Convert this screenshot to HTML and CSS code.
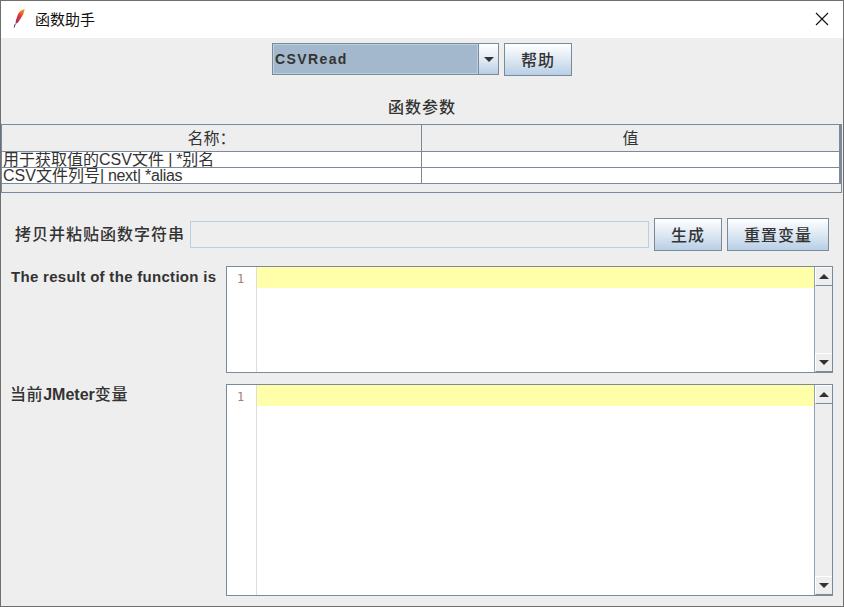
FILE: index.html
```html
<!DOCTYPE html>
<html>
<head lang="zh">
  <meta charset="UTF-8">
  <title>函数助手</title>
  <link rel="stylesheet" href="styles.css">
</head>
<body>
<div class="window">
  <div class="titlebar">
    <svg class="feather" width="16" height="22" viewBox="0 0 16 22">
      <defs>
        <linearGradient id="quill" x1="0.8" y1="0" x2="0.2" y2="1">
          <stop offset="0" stop-color="#f79a22"/>
          <stop offset="0.5" stop-color="#dc3a2c"/>
          <stop offset="1" stop-color="#9c2a78"/>
        </linearGradient>
      </defs>
      <path d="M13.6 1C11 1.6 8.6 3.4 7 6.2L5 12L4.4 16L7 14.4L10 10C12 7.2 13.4 4.2 13.6 1Z" fill="url(#quill)"/>
      <path d="M4.2 16L3.2 19.5" stroke="#5b2a80" stroke-width="1" fill="none"/>
    </svg>
    <span class="title">函数助手</span>
    <svg class="close" width="14" height="14" viewBox="0 0 14 14">
      <path d="M1 1L13 13M13 1L1 13" stroke="#111" stroke-width="1.1" fill="none"/>
    </svg>
  </div>

  <div class="picker">
    <div class="combo">
      <div class="combo-value">CSVRead</div>
      <div class="combo-arrow"><span class="arrow-down"></span></div>
    </div>
    <div class="btn btn-help">帮助</div>
  </div>

  <div class="params-title">函数参数</div>

  <div class="params">
    <div class="row row-head">
      <div class="cell">名称：</div>
      <div class="cell">值</div>
    </div>
    <div class="row">
      <div class="cell">用于获取值的CSV文件 <span class="tight">| *</span>别名</div>
      <div class="cell"></div>
    </div>
    <div class="row">
      <div class="cell">CSV文件列号<span class="tight">| next| *alias</span></div>
      <div class="cell"></div>
    </div>
  </div>

  <div class="copy-row">
    <div class="copy-label">拷贝并粘贴函数字符串</div>
    <div class="copy-field"></div>
    <div class="btn btn-make">生成</div>
    <div class="btn btn-reset">重置变量</div>
  </div>

  <div class="output output-result">
    <div class="output-label">The result of the function is</div>
    <div class="editor">
      <div class="gutter">1</div>
      <div class="code"><div class="current-line"></div></div>
      <div class="scrollbar">
        <div class="sb-btn"><span class="arrow-up"></span></div>
        <div class="sb-track"></div>
        <div class="sb-btn"><span class="arrow-down"></span></div>
      </div>
    </div>
  </div>

  <div class="output output-vars">
    <div class="output-label"><span class="cjk">当前</span>JMeter<span class="cjk">变量</span></div>
    <div class="editor">
      <div class="gutter">1</div>
      <div class="code"><div class="current-line"></div></div>
      <div class="scrollbar">
        <div class="sb-btn"><span class="arrow-up"></span></div>
        <div class="sb-track"></div>
        <div class="sb-btn"><span class="arrow-down"></span></div>
      </div>
    </div>
  </div>
</div>
</body>
</html>
```

FILE: styles.css
```css
* {
  margin: 0;
  padding: 0;
  box-sizing: border-box;
}

body {
  background: #eeeeee;
  font-family: "Liberation Sans", "Noto Sans CJK SC", sans-serif;
  color: #333333;
}

.window {
  width: 844px;
  height: 607px;
  border: 1px solid #6f6f6f;
  background: #eeeeee;
  overflow: hidden;
}

.titlebar {
  height: 37px;
  background: #fff;
  display: flex;
  align-items: center;
  padding-left: 10px;
  padding-right: 14px;
}

.feather {
  flex: none;
  margin-top: -1px;
}

.title {
  margin-left: 8px;
  margin-top: -2px;
  font-family: "Noto Sans CJK SC", sans-serif;
  font-size: 15px;
  color: #111;
  flex: 1;
}

.close {
  margin-top: -1px;
}

.picker {
  display: flex;
  justify-content: center;
  align-items: flex-start;
  gap: 5px;
  margin-top: 5px;
}

.combo {
  width: 227px;
  height: 32px;
  display: flex;
  border: 1px solid #7a8a99;
}

.combo-value {
  flex: 1;
  background: #a3b8cc;
  border: 1px solid #b8cfe5;
  font-weight: bold;
  font-size: 14px;
  letter-spacing: 1.4px;
  line-height: 28px;
  padding-left: 1px;
}

.combo-arrow {
  width: 20px;
  border-left: 1px solid #7a8a99;
  background: linear-gradient(#fff, #dde8f3 55%, #b8cfe5);
  display: flex;
  align-items: center;
  justify-content: center;
}

.arrow-down {
  width: 0;
  height: 0;
  border-left: 5px solid transparent;
  border-right: 5px solid transparent;
  border-top: 5px solid #333;
}

.arrow-up {
  width: 0;
  height: 0;
  border-left: 5px solid transparent;
  border-right: 5px solid transparent;
  border-bottom: 5px solid #333;
}

.btn {
  height: 33px;
  border: 1px solid #7a8a99;
  background: linear-gradient(#fff, #dde8f3 50%, #b8cfe5);
  font-family: "Noto Sans CJK SC", sans-serif;
  font-size: 16px;
  font-weight: 500;
  letter-spacing: 1px;
  line-height: 30px;
  text-align: center;
}

.btn-help {
  width: 68px;
}

.params-title {
  margin-top: 12px;
  height: 36px;
  line-height: 36px;
  text-align: center;
  font-family: "Noto Sans CJK SC", sans-serif;
  font-size: 16px;
  font-weight: 500;
  letter-spacing: 1px;
}

.params {
  width: 841px;
  height: 69px;
  border: 1px solid #7a8a99;
}

.row {
  display: grid;
  grid-template-columns: 420px 1fr;
  height: 16px;
  background: #fff;
  border-bottom: 1px solid #7a8a99;
  border-right: 2px solid #7a8a99;
}

.row-head {
  height: 27px;
  background: #eeeeee;
}

.cell {
  font-size: 16px;
  line-height: 16px;
  white-space: nowrap;
  overflow: hidden;
  padding-left: 1px;
}

.cell:first-child {
  border-right: 1px solid #7a8a99;
}

.row-head .cell {
  line-height: 27px;
  text-align: center;
  padding-left: 0;
}

.tight {
  letter-spacing: -0.3px;
}

.copy-row {
  display: flex;
  align-items: center;
  gap: 5px;
  margin-top: 25px;
  height: 33px;
  padding-left: 14px;
}

.copy-label {
  width: 170px;
  margin-top: -3px;
  font-family: "Noto Sans CJK SC", sans-serif;
  font-size: 16px;
  font-weight: 500;
  letter-spacing: 1px;
  white-space: nowrap;
}

.copy-field {
  width: 459px;
  height: 27px;
  border: 1px solid #b8cfe5;
}

.btn-make {
  width: 68px;
}

.btn-reset {
  width: 102px;
}

.output {
  display: flex;
  padding-left: 10px;
  margin-top: 11px;
}

.output-result {
  height: 107px;
  margin-top: 15px;
}

.output-vars {
  height: 212px;
  padding-left: 9px;
}

.output-label {
  width: 215px;
  padding-top: 1px;
  font-weight: bold;
  font-size: 15px;
  letter-spacing: 0.3px;
  line-height: 20px;
  white-space: nowrap;
}

.output-vars .output-label {
  width: 216px;
  font-size: 16px;
  letter-spacing: 0;
}

.output-vars .cjk {
  font-weight: 500;
  letter-spacing: 0.6px;
}

.editor {
  width: 607px;
  display: flex;
  border: 1px solid #7a8a99;
  background: #fff;
}

.gutter {
  width: 30px;
  border-right: 1px solid #dddddd;
  font-family: "DejaVu Sans Mono", monospace;
  font-size: 12px;
  line-height: 25px;
  color: #a5826e;
  padding-left: 10px;
}

.code {
  flex: 1;
}

.current-line {
  height: 21px;
  background: #ffffaa;
}

.scrollbar {
  width: 18px;
  display: flex;
  flex-direction: column;
  background: #eeeeee;
  border-left: 1px solid #8fa3b8;
}

.sb-btn {
  height: 19px;
  display: flex;
  align-items: center;
  justify-content: center;
  border-top: 1px solid #fff;
  border-left: 1px solid #fff;
  border-bottom: 1px solid #7a8a99;
}

.sb-track {
  flex: 1;
}
```
